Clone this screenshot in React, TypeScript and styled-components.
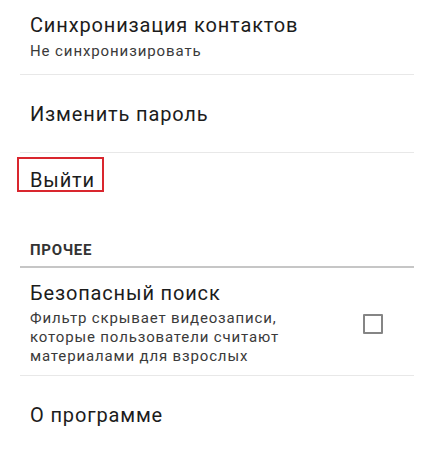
import React, { useState } from 'react'
import styled, { createGlobalStyle } from 'styled-components'

const GlobalStyle = createGlobalStyle`
    body {
        margin: 0;
        background: #ffffff;
        font-family: Roboto, "Noto Sans", "Liberation Sans", sans-serif;
        color: #1c1c1c;
    }
`;

const SettingsList = styled.div`
    display: flex;
    flex-direction: column;
    padding: 0 20px;
`;

const Row = styled.div<{ $height?: number; $divider?: boolean }>`
    box-sizing: border-box;
    display: flex;
    align-items: center;
    min-height: ${p => (p.$height ? `${p.$height}px` : 'auto')};
    padding-left: 10px;
    border-bottom: ${p => (p.$divider ? '1px solid #e8e8e8' : 'none')};
`;

const TwoLineRow = styled(Row)`
    align-items: flex-start;
    flex-direction: column;
    justify-content: flex-start;
    padding-top: 13px;
`;

const CheckRow = styled(Row)`
    padding: 13px 31px 9px 10px;
`;

const TextColumn = styled.div`
    display: flex;
    flex-direction: column;
    flex: 1;
`;

const Title = styled.div`
    font-size: 20px;
    line-height: 24px;
    letter-spacing: 0.85px;
    color: #1c1c1c;
`;

const Summary = styled.div`
    font-size: 15px;
    line-height: 20px;
    letter-spacing: 0.9px;
    margin-top: 4px;
    color: #3a3a3a;
`;

const Description = styled.div`
    font-size: 15px;
    line-height: 19px;
    letter-spacing: 0.85px;
    margin-top: 4px;
    max-width: 266px;
    color: #3a3a3a;
`;

const Highlight = styled.span`
    display: inline-block;
    margin: 4px 0 0 -13px;
    padding: 11px 7px 0 11px;
    border: 2px solid #d9262e;
    font-size: 20px;
    line-height: 20px;
    letter-spacing: 0.85px;
    color: #1c1c1c;
`;

const CategoryHeader = styled.div`
    margin-top: 48px;
    padding: 0 0 6px 10px;
    border-bottom: 2px solid #c6c6c6;
    font-size: 15px;
    line-height: 20px;
    font-weight: 700;
    letter-spacing: 0.7px;
    color: #333333;
`;

const CheckBox = styled.button<{ $checked: boolean }>`
    box-sizing: border-box;
    width: 20px;
    height: 20px;
    padding: 0;
    border: 2px solid #858585;
    border-radius: 1px;
    background: ${p => (p.$checked ? '#858585' : 'transparent')};
    cursor: pointer;
`;

export default function App() {
    const [safeSearch, setSafeSearch] = useState(false);

    return (
        <>
            <GlobalStyle />
            <SettingsList>
                <TwoLineRow $height={75} $divider>
                    <Title>Синхронизация контактов</Title>
                    <Summary>Не синхронизировать</Summary>
                </TwoLineRow>

                <Row $height={78} $divider>
                    <Title>Изменить пароль</Title>
                </Row>

                <Row>
                    <Highlight>Выйти</Highlight>
                </Row>

                <CategoryHeader>ПРОЧЕЕ</CategoryHeader>

                <CheckRow $divider>
                    <TextColumn>
                        <Title>Безопасный поиск</Title>
                        <Description>
                            Фильтр скрывает видеозаписи, которые пользователи считают материалами для взрослых
                        </Description>
                    </TextColumn>
                    <CheckBox $checked={safeSearch} onClick={() => setSafeSearch(!safeSearch)} />
                </CheckRow>

                <Row $height={78}>
                    <Title>О программе</Title>
                </Row>
            </SettingsList>
        </>
    )
}
